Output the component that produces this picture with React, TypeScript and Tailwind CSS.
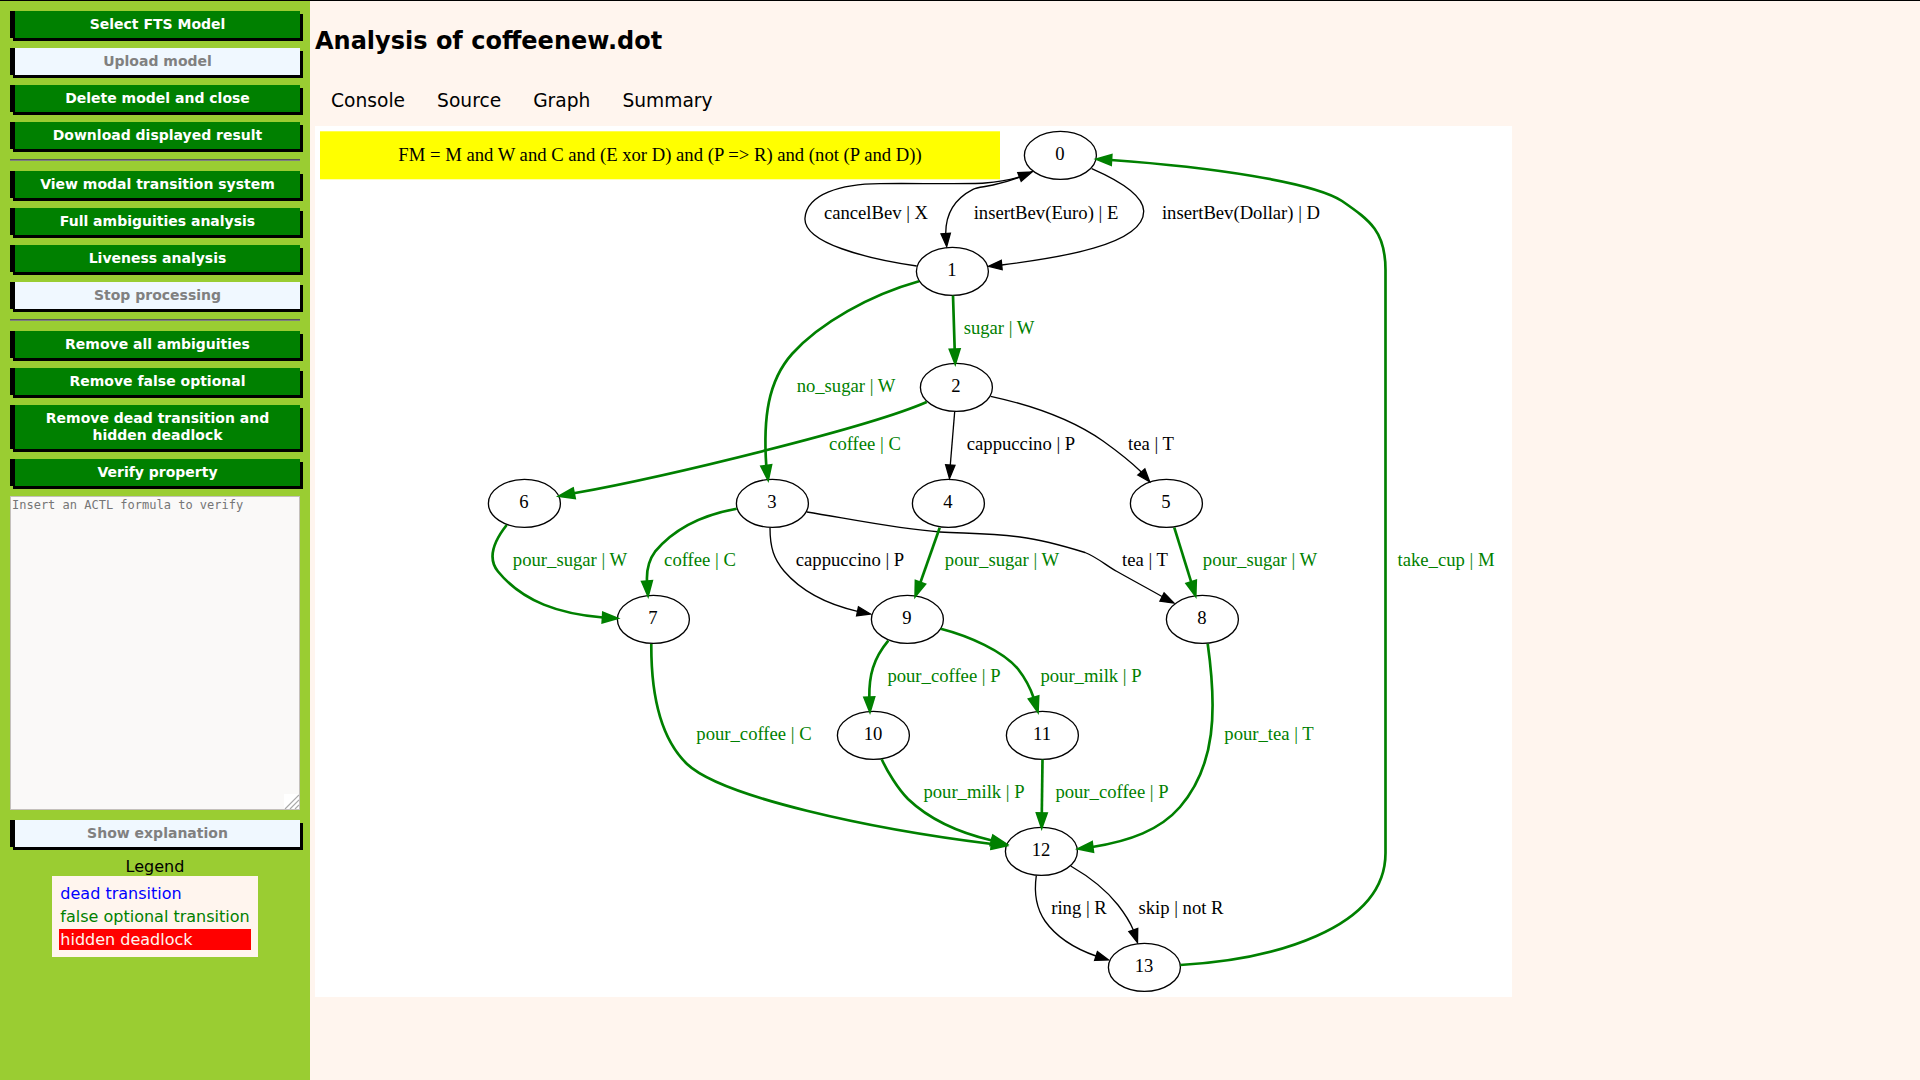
import type { ReactNode } from "react";

type Point = [number, number];

type Edge = {
  path: string;
  base: Point;
  tip: Point;
  label: string;
  at: Point;
  optional?: boolean;
};

const nodes: { id: number; x: number; y: number }[] = [
  { id: 0, x: 1060, y: 155 },
  { id: 1, x: 952, y: 271 },
  { id: 2, x: 956, y: 387 },
  { id: 3, x: 772, y: 503 },
  { id: 4, x: 948, y: 503 },
  { id: 5, x: 1166, y: 503 },
  { id: 6, x: 524, y: 503 },
  { id: 7, x: 653, y: 619 },
  { id: 8, x: 1202, y: 619 },
  { id: 9, x: 907, y: 619 },
  { id: 10, x: 873, y: 735 },
  { id: 11, x: 1042, y: 735 },
  { id: 12, x: 1041, y: 851 },
  { id: 13, x: 1144, y: 967 },
];

const edges: Edge[] = [
  { path: "M1033 171 C1021 177.5 1007 182 993 185 C985 187 978 187 973 189.3 C956 198 945.7 212 945.7 233.5", base: [945.7, 233.5], tip: [946.7, 246.5], label: "insertBev(Euro) | E", at: [1046, 219] },
  { path: "M916.7 266 C868 259 803 243 805 218 C807 194 841 184 880 183.7 C905 183 965 184.5 985 183 C998 182 1009 180 1019.5 177", base: [1019.5, 177], tip: [1032, 172], label: "cancelBev | X", at: [876, 219] },
  { path: "M1091.7 168.7 C1113 178 1143 194 1143.7 211 C1144 245 1057 258 1001.7 265", base: [1001.7, 265], tip: [988.5, 266.3], label: "insertBev(Dollar) | D", at: [1241, 219] },
  { path: "M953 295.5 L954.7 349.5", base: [954.7, 349.5], tip: [955.2, 363], label: "sugar | W", at: [999, 334], optional: true },
  { path: "M919 281.3 C870 295 820 323 792 354 C768 381 763 418 766.3 466", base: [766.3, 466], tip: [768, 479], label: "no_sugar | W", at: [846, 392], optional: true },
  { path: "M926.7 402 C870 427 670 476 573.7 493.3", base: [573.7, 493.3], tip: [560, 496], label: "coffee | C", at: [865, 450], optional: true },
  { path: "M954.7 411.5 L950.3 465", base: [950.3, 465], tip: [949.5, 478.5], label: "cappuccino | P", at: [1021, 450] },
  { path: "M990.7 396.3 C1035 406 1073 420 1103 441 C1117 451 1130 461 1141.3 472", base: [1141.3, 472], tip: [1149.7, 481.8], label: "tea | T", at: [1151, 450] },
  { path: "M736.7 508.7 C702 515 673 530 655 551.7 C648 561 646.5 571 647 581.5", base: [647, 581.5], tip: [648, 595], label: "coffee | C", at: [700, 566], optional: true },
  { path: "M770 527.7 C770 548 774 559 784 571 C802 592 830 605 857.5 611.3", base: [857.5, 611.3], tip: [870.5, 614], label: "cappuccino | P", at: [850, 566] },
  { path: "M807 512 C850 519 898 529 940 532 C968 533.5 990 533 1020 537 C1043 540 1064 546 1085 552.5 C1097 557 1108 567 1117 571.5 C1132 580 1147 588 1162 596.5", base: [1162, 597], tip: [1174, 603], label: "tea | T", at: [1145, 566] },
  { path: "M939.7 527.7 L920.3 582.7", base: [920.3, 582.7], tip: [915.6, 595.4], label: "pour_sugar | W", at: [1002, 566], optional: true },
  { path: "M1174.3 527.7 L1191.3 582.3", base: [1191.3, 582.3], tip: [1195.3, 595.2], label: "pour_sugar | W", at: [1260, 566], optional: true },
  { path: "M506.7 525 C494 541 487 558 498 571.5 C523 602 560 614 603 617.5", base: [603, 617.5], tip: [616.5, 618.3], label: "pour_sugar | W", at: [570, 566], optional: true },
  { path: "M651.3 644 C651 695 660 738 687 764 C722 797 870 829 992 844", base: [992, 844], tip: [1005.5, 845.5], label: "pour_coffee | C", at: [754, 740], optional: true },
  { path: "M888.3 640.7 C873 659 869 676 869.3 697.5", base: [869.3, 697.5], tip: [869.9, 711], label: "pour_coffee | P", at: [944, 682], optional: true },
  { path: "M940.7 628.7 C969 636 1003 651 1018 669 C1025 678 1030 687 1033.7 698", base: [1033.7, 698], tip: [1037.6, 711], label: "pour_milk | P", at: [1091, 682], optional: true },
  { path: "M881.7 759.3 C887 771 898 789 908 799 C930 820 960 833 992 840.5", base: [992, 840.5], tip: [1005.5, 844], label: "pour_milk | P", at: [974, 798], optional: true },
  { path: "M1042.5 759.5 L1041.8 813.5", base: [1041.8, 813.5], tip: [1041.7, 827], label: "pour_coffee | P", at: [1112, 798], optional: true },
  { path: "M1207.7 643.7 C1217 710 1216 765 1180 807 C1160 830 1130 841 1092.3 847", base: [1092.3, 847], tip: [1079, 848.7], label: "pour_tea | T", at: [1269, 740], optional: true },
  { path: "M1036.3 875.7 C1034 892 1036 908 1045 921 C1057 938 1076 949 1096 956", base: [1096, 956], tip: [1108.5, 960], label: "ring | R", at: [1079, 914] },
  { path: "M1070.7 866 C1088 876 1107 891 1118 905 C1125 914 1130 922 1133.3 930", base: [1133.3, 930], tip: [1137.5, 942.5], label: "skip | not R", at: [1181, 914] },
  { path: "M1180.3 965 C1270 960 1385.5 930 1385.5 853 L1385.5 270 C1385.5 232 1371 221 1342 201 C1313 182 1210 167 1111 160", base: [1111, 160], tip: [1097.5, 159.2], label: "take_cup | M", at: [1446, 566], optional: true },
];

function arrowHead([bx, by]: Point, [tx, ty]: Point) {
  const dx = tx - bx;
  const dy = ty - by;
  const length = Math.hypot(dx, dy);
  const ox = (-dy / length) * 4.67;
  const oy = (dx / length) * 4.67;
  return `${bx + ox},${by + oy} ${tx},${ty} ${bx - ox},${by - oy}`;
}

function TransitionGraph() {
  return (
    <svg
      className="block h-auto w-full font-['Liberation_Serif',serif] text-[14pt]"
      viewBox="315 126 1197 871"
      role="img"
      aria-label="Transition graph of coffeenew.dot"
      textAnchor="middle"
    >
      <rect x="320" y="131.3" width="680" height="48" fill="yellow" />
      <text x="660" y="161">
        FM = M and W and C and (E xor D) and (P =&gt; R) and (not (P and D))
      </text>
      {nodes.map((n) => (
        <g key={n.id}>
          <ellipse cx={n.x + 0.4} cy={n.y + 0.4} rx="36" ry="24" fill="none" stroke="black" strokeWidth="1.33" />
          <text x={n.x} y={n.y + 5}>
            {n.id}
          </text>
        </g>
      ))}
      {edges.map((e) => {
        const color = e.optional ? "green" : "black";
        return (
          <g key={e.path} fill={color} stroke={color} strokeWidth={e.optional ? 2.67 : 1.33}>
            <path d={e.path} fill="none" />
            <polygon points={arrowHead(e.base, e.tip)} />
            <text x={e.at[0]} y={e.at[1]} stroke="none">
              {e.label}
            </text>
          </g>
        );
      })}
    </svg>
  );
}

function ActionButton({ children, disabled }: { children: ReactNode; disabled?: boolean }) {
  return (
    <button
      type="button"
      disabled={disabled}
      className="w-full border-l-5 border-black bg-[#008000] px-4 py-[5px] text-center text-[14px] leading-[17px] font-bold text-white shadow-[3px_3px_0_black] disabled:bg-[#f0f8ff] disabled:text-[#808080]"
    >
      {children}
    </button>
  );
}

function Divider() {
  return <hr className="h-[2px] border-0 border-t border-[#555] bg-[#808080]" />;
}

function FormulaInput() {
  return (
    <div className="relative">
      <textarea
        aria-label="ACTL formula"
        placeholder="Insert an ACTL formula to verify"
        className="block h-[314px] w-full border border-[#c4c0bc] bg-[#faf9f8] p-px font-['DejaVu_Sans_Mono',monospace] text-[12px] leading-[15px] placeholder:text-[#757575]"
      />
      <svg
        className="pointer-events-none absolute right-px bottom-px size-[15px] bg-white"
        viewBox="0 0 15 15"
        stroke="#a8a8a8"
        strokeWidth="1.2"
        aria-hidden="true"
      >
        <path d="M1 15 15 1M6 15 15 6M11 15 15 11" />
      </svg>
    </div>
  );
}

function Legend() {
  return (
    <section className="mt-[10px] flex flex-col items-center text-[16px] leading-[19px]">
      <h2>Legend</h2>
      <ul className="flex flex-col gap-[2px] bg-[#fff5ee] p-[7px]">
        <li className="p-px text-[#0000ff]">dead transition</li>
        <li className="p-px text-[#008000]">false optional transition</li>
        <li className="bg-[#ff0000] p-px text-[#fff5ee]">hidden deadlock</li>
      </ul>
    </section>
  );
}

function Sidebar() {
  return (
    <aside className="w-[310px] shrink-0 bg-[#9acd32] p-[10px]">
      <div className="flex flex-col gap-[10px]">
        <ActionButton>Select FTS Model</ActionButton>
        <ActionButton disabled>Upload model</ActionButton>
        <ActionButton>Delete model and close</ActionButton>
        <ActionButton>Download displayed result</ActionButton>
        <Divider />
        <ActionButton>View modal transition system</ActionButton>
        <ActionButton>Full ambiguities analysis</ActionButton>
        <ActionButton>Liveness analysis</ActionButton>
        <ActionButton disabled>Stop processing</ActionButton>
        <Divider />
        <ActionButton>Remove all ambiguities</ActionButton>
        <ActionButton>Remove false optional</ActionButton>
        <ActionButton>Remove dead transition and hidden deadlock</ActionButton>
        <ActionButton>Verify property</ActionButton>
        <FormulaInput />
        <ActionButton disabled>Show explanation</ActionButton>
      </div>
      <Legend />
    </aside>
  );
}

export default function App() {
  return (
    <div className="flex min-h-screen border-t border-black bg-[#fff5ee] font-['DejaVu_Sans',sans-serif] text-black">
      <Sidebar />
      <main className="min-w-0 flex-1 pl-[5px]">
        <h1 className="pt-[26px] text-[24px] leading-[28px] font-bold">Analysis of coffeenew.dot</h1>
        <nav className="mt-[21px] flex">
          {["Console", "Source", "Graph", "Summary"].map((tab) => (
            <button key={tab} type="button" className="px-4 py-[13px] text-[14pt] leading-[24px]">
              {tab}
            </button>
          ))}
        </nav>
        <div className="max-w-[1197px] bg-white">
          <TransitionGraph />
        </div>
      </main>
    </div>
  );
}
